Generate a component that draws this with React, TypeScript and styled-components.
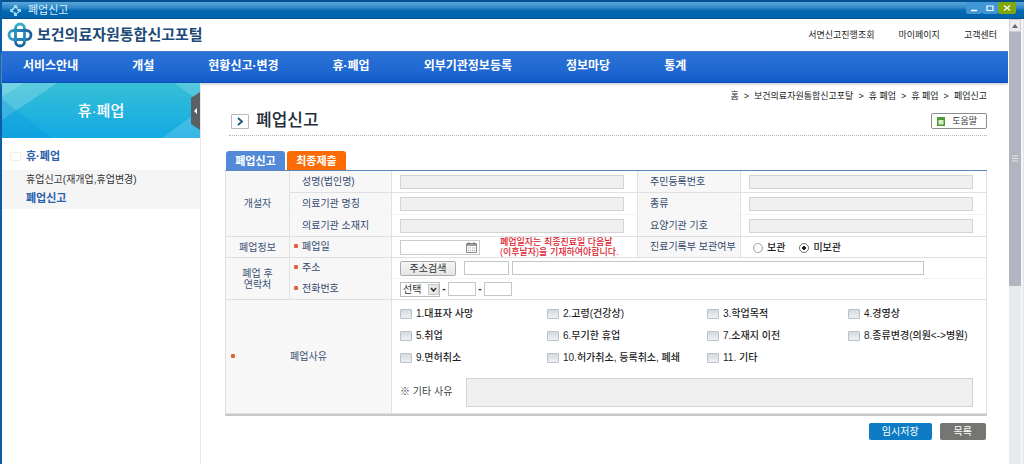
import React from 'react';
import styled, { createGlobalStyle, css } from 'styled-components';

const Global = createGlobalStyle`
  *, *::before, *::after { box-sizing: border-box; }
  body {
    margin: 0;
    background: #fff;
    color: #333;
    font: 10px/14px "Liberation Sans", "Noto Sans CJK KR", sans-serif;
  }
  button, input, select, textarea { font: inherit; color: inherit; margin: 0; }
  a { color: inherit; text-decoration: none; }
`;

const Window = styled.div`
  display: flex;
  flex-direction: column;
  min-height: 100vh;
  border-left: 2px solid #0a5ea8;
`;

const TitleBar = styled.div`
  display: flex;
  align-items: center;
  gap: 7px;
  height: 19px;
  padding: 0 8px;
  border-top: 2px solid #05508f;
  border-bottom: 1px solid #04528f;
  background: linear-gradient(#5aa7da 0, #3088c6 35%, #0368b3 55%, #0062ab 100%);
  color: #d5edff;
  font-size: 11px;
`;

const WindowButtons = styled.div`
  display: flex;
  align-self: flex-start;
  margin-left: auto;
`;

const WindowButton = styled.button<{ $close?: boolean }>`
  display: flex;
  align-items: center;
  justify-content: center;
  width: ${p => (p.$close ? 18 : 16)}px;
  height: 12px;
  padding: 0;
  border: 0;
  border-radius: 0 0 2px 2px;
  background: ${p => (p.$close ? '#7ea80d' : '#3f97d8')};
`;

const Body = styled.div`
  display: flex;
  flex: 1;
`;

const Page = styled.div`
  display: flex;
  flex: 1;
  flex-direction: column;
  min-width: 0;
`;

const ScrollTrack = styled.div`
  display: flex;
  flex-direction: column;
  width: 16px;
  padding: 0 3px 0 1px;
  border-right: 1px solid #e3e6e8;
  background: linear-gradient(90deg, #fff 1px, #e6ebec 1px, #e6ebec 13px, #f3f5f6 13px);
`;

const ScrollArrow = styled.button`
  display: flex;
  align-items: center;
  justify-content: center;
  width: 12px;
  height: 13px;
  padding: 0;
  border: 1px solid #cfcfd3;
  background: #ececee;
`;

const ScrollThumb = styled.div`
  display: flex;
  align-items: center;
  justify-content: center;
  width: 12px;
  height: 57%;
  background: #b4b4c0;
`;

const Header = styled.header`
  display: flex;
  align-items: center;
  justify-content: space-between;
  height: 32px;
  padding: 0 11px 0 5px;
`;

const Brand = styled.a`
  display: flex;
  align-items: center;
  gap: 4px;
  color: #1d4a78;
  font-size: 15px;
  font-weight: 700;
  line-height: 20px;
`;

const QuickLinks = styled.nav`
  display: flex;
  gap: 24px;
  color: #222;
  font-size: 9px;
`;

const MainNav = styled.nav`
  display: flex;
  height: 32px;
  padding: 0 21px;
  gap: 54px;
  border-top: 1px solid #3f7ccb;
  border-bottom: 1px solid #0c4fb4;
  background: linear-gradient(#2a72d4, #2069d2 60%, #135bcb);
  box-shadow: 0 2px 2px #d5d8dc;
  color: #fff;
  font-size: 12px;
  font-weight: 700;
  line-height: 28px;
  white-space: nowrap;
`;

const Content = styled.div`
  display: flex;
  flex: 1;
`;

const Sidebar = styled.aside`
  flex: none;
  width: 199px;
  border-right: 1px solid #e8e8e8;
`;

const Banner = styled.div`
  position: relative;
  display: flex;
  align-items: center;
  justify-content: center;
  height: 55px;
  color: #fff;
  font-size: 15px;
  font-weight: 500;
`;

const BannerArt = styled.svg`
  position: absolute;
  inset: 0;
  width: 100%;
  height: 100%;
`;

const BannerText = styled.span`
  position: relative;
`;

const Collapse = styled.button`
  position: absolute;
  top: 9px;
  right: 0;
  width: 9px;
  height: 38px;
  padding: 0;
  border: 0;
  background: none;
`;

const SideHeading = styled.h2`
  display: flex;
  align-items: center;
  gap: 5px;
  height: 32px;
  margin: 0;
  padding: 4px 8px 0;
  color: #2c62ac;
  font-size: 11px;
`;

const Folder = styled.span`
  width: 11px;
  height: 9px;
  border: 1px solid #f1eee8;
`;

const SideList = styled.ul`
  display: grid;
  gap: 4px;
  margin: 0;
  padding: 2px 0 3px 24px;
  list-style: none;
  background: #f5f5f6;
  line-height: 15px;
`;

const SideLink = styled.a<{ $current?: boolean }>`
  ${p => p.$current && css`
    color: #2c62ac;
    font-size: 11px;
    font-weight: 700;
  `}
`;

const Main = styled.main`
  flex: 1;
  min-width: 0;
  padding: 6px 21px 24px 24px;
`;

const Crumbs = styled.nav`
  display: flex;
  justify-content: flex-end;
  gap: 5px;
  color: #222;
  font-size: 9px;
  line-height: 14px;
`;

const TitleRow = styled.div`
  display: flex;
  align-items: center;
  gap: 7px;
  margin: 4px 0 0 4px;
  height: 29px;
  padding: 0 0 0 2px;
  border-bottom: 1px dotted #b5b5b5;
`;

const Heading = styled.h1`
  margin: 0;
  color: #222c38;
  font-size: 17px;
  font-weight: 500;
  line-height: 20px;
`;

const HelpButton = styled.button`
  display: flex;
  align-items: center;
  gap: 7px;
  height: 16px;
  margin-left: auto;
  padding: 0 9px 0 5px;
  border: 1px solid #8d8d8d;
  border-radius: 2px;
  background: #fff;
  font-size: 9px;
  line-height: 14px;
`;

const Tabs = styled.div`
  display: flex;
  gap: 2px;
  margin: 15px 0 0 1px;
`;

const Tab = styled.button<{ $accent?: boolean }>`
  width: 59px;
  height: 19px;
  padding: 0;
  border: 0;
  border-radius: 3px 3px 0 0;
  background: ${p => (p.$accent ? '#fb6b04' : '#5289d8')};
  color: #fff;
  font-size: 11px;
  font-weight: 700;
  line-height: 18px;
`;

const FormTable = styled.table`
  width: 100%;
  table-layout: fixed;
  border-spacing: 0;
  border-top: 1px solid #5b86bd;
  border-bottom: 2px solid #c6c8cb;
  border-left: 1px solid #dcdddf;
`;

const Col = styled.col<{ $width?: number }>`
  width: ${p => (p.$width ? p.$width + 'px' : 'auto')};
`;

const Row = styled.tr<{ $height?: number }>`
  height: ${p => p.$height ?? 22}px;
`;

const cell = css<{ $soft?: boolean }>`
  height: inherit;
  border-right: 1px solid #e0e1e3;
  border-bottom: 1px solid ${p => (p.$soft ? '#f3f3f4' : '#dfe0e2')};
`;

const Group = styled.th<{ $soft?: boolean }>`
  ${cell}
  padding: 0;
  background: #f7f7f8;
  color: #3b5172;
  font-weight: 400;
  line-height: 11px;
`;

const Label = styled.th<{ $soft?: boolean; $required?: boolean }>`
  ${cell}
  padding: 0 0 0 ${p => (p.$required ? 4 : 12)}px;
  background: #f7f7f8;
  color: #34496b;
  font-weight: 400;
  line-height: 14px;
  text-align: left;
  white-space: nowrap;
`;

const Value = styled.td<{ $soft?: boolean }>`
  ${cell}
  padding: 0 13px 0 8px;
`;

const Star = styled.span`
  display: inline-block;
  width: 4px;
  height: 4px;
  margin: 0 4px 2px 0;
  border-radius: 1px;
  background: #e2603a;
`;

const ReasonHead = styled.div`
  display: grid;
  grid-template-columns: 4px 1fr 4px;
  align-items: center;
  padding: 0 5px;
`;

const Line = styled.div`
  display: flex;
  align-items: center;
`;

const Field = styled.input<{ $width?: number; $gap?: number }>`
  display: block;
  width: ${p => (p.$width ? p.$width + 'px' : '100%')};
  height: 14px;
  margin-left: ${p => p.$gap ?? 0}px;
  padding: 0 3px;
  border: 1px solid #c3c5c8;
  border-radius: 0;
  background: #fff;
  &:disabled {
    border-color: #d2d3d5;
    background: #f0f0f0;
  }
`;

const DateBox = styled.div`
  display: flex;
  align-items: center;
  width: 80px;
  height: 15px;
  padding-right: 2px;
  border: 1px solid #c9cbce;
`;

const DateInput = styled.input`
  flex: 1;
  min-width: 0;
  height: 12px;
  padding: 0 3px;
  border: 0;
  background: none;
`;

const IconButton = styled.button`
  display: flex;
  padding: 0;
  border: 0;
  background: none;
`;

const Notice = styled.p`
  margin: 0 0 0 20px;
  color: #e0202c;
  font-size: 9px;
  font-weight: 500;
  line-height: 10px;
  white-space: nowrap;
`;

const SearchButton = styled.button`
  flex: none;
  width: 56px;
  height: 15px;
  margin-right: 8px;
  padding: 0;
  border: 1px solid #a9abae;
  border-radius: 2px;
  background: linear-gradient(#f6f6f6, #e4e4e4);
  line-height: 13px;
`;

const AddressField = styled(Field)`
  flex: 0 1 412px;
  min-width: 0;
`;

const SelectBox = styled.div`
  position: relative;
  width: 40px;
  height: 15px;
`;

const Select = styled.select`
  width: 100%;
  height: 100%;
  padding: 0 0 0 2px;
  border: 1px solid #b9bbbe;
  border-radius: 0;
  appearance: none;
  background: #fff;
  line-height: 13px;
`;

const SelectArrow = styled.svg`
  position: absolute;
  top: 2px;
  right: 1px;
  pointer-events: none;
`;

const Dash = styled.span`
  width: 8px;
  color: #222;
  font-weight: 700;
  text-align: center;
`;

const Radios = styled.div`
  display: flex;
  gap: 14px;
  padding: 2px 0 0 4px;
  color: #222;
`;

const Choice = styled.label`
  display: flex;
  align-items: center;
  gap: 4px;
  color: #1c1c1c;
  font-weight: 500;
  line-height: 14px;
  white-space: nowrap;
`;

const Radio = styled.input`
  appearance: none;
  width: 10px;
  height: 10px;
  border: 1px solid #9c9c9c;
  border-radius: 50%;
  background: #fff;
  &:checked {
    border-color: #6d6d6d;
    background: radial-gradient(circle, #222 0 2px, #fff 2px);
  }
`;

const Check = styled.input`
  appearance: none;
  width: 12px;
  height: 10px;
  border: 1px solid #b9c1c9;
  border-radius: 1px;
  background: linear-gradient(#d3dae1, #eef1f4);
`;

const Reasons = styled.div`
  display: grid;
  grid-template-columns: 147fr 160fr 141fr 125fr;
  grid-auto-rows: 14px;
  row-gap: 8px;
`;

const EtcRow = styled.label`
  display: flex;
  align-items: center;
  gap: 14px;
  margin-top: 13px;
  color: #444;
  white-space: nowrap;
`;

const EtcText = styled.textarea`
  display: block;
  flex: 1;
  height: 29px;
  border: 1px solid #d2d3d5;
  border-radius: 0;
  background: #f0f0f0;
  resize: none;
`;

const Actions = styled.div`
  display: flex;
  justify-content: flex-end;
  gap: 8px;
  margin-top: 7px;
  padding-right: 1px;
`;

const ActionButton = styled.button<{ $primary?: boolean }>`
  height: 17px;
  padding: 0 ${p => (p.$primary ? 13 : 14)}px;
  border: 0;
  border-radius: 2px;
  background: ${p => (p.$primary ? '#0d7cc4' : '#757572')};
  color: #fff;
  line-height: 16px;
`;

const LoopMark = () => (
  <svg width="26" height="26" viewBox="0 0 26 26" fill="none" strokeWidth="2.800" aria-hidden="true">
    <defs>
      <linearGradient id="loopV" x1="0" y1="0" x2="0" y2="1">
        <stop offset="0" stopColor="#35b3c6" />
        <stop offset="1" stopColor="#1a5fa0" />
      </linearGradient>
      <linearGradient id="loopH" x1="0" y1="0" x2="1" y2="0">
        <stop offset="0" stopColor="#2f9fca" />
        <stop offset="1" stopColor="#1b5d9c" />
      </linearGradient>
    </defs>
    <rect x="8.500" y="2" width="9" height="22" rx="4.500" stroke="url(#loopV)" />
    <rect x="2" y="8.500" width="22" height="9" rx="4.500" stroke="url(#loopH)" />
    <path d="M8.500 6.500v4M17.500 15.500v4" stroke="#2a8fbb" />
  </svg>
);

const TitleMark = () => (
  <svg width="11" height="11" viewBox="0 0 11 11" aria-hidden="true">
    <path d="M4 0h3v3H4zM4 8h3v3H4zM0 4h3v3H0zM8 4h3v3H8z" fill="#8fdcf3" />
    <path d="M3 3h5v5H3z" fill="none" stroke="#d8f3ff" strokeDasharray="2 1" />
  </svg>
);

const menu = ['서비스안내', '개설', '현황신고·변경', '휴·폐업', '외부기관정보등록', '정보마당', '통계'];
const crumbs = ['홈', '보건의료자원통합신고포탈', '휴 폐업', '휴 폐업', '폐업신고'];
const owner = [
  ['성명(법인명)', '주민등록번호'],
  ['의료기관 명칭', '종류'],
  ['의료기관 소재지', '요양기관 기호'],
];
const reasons = [
  '1.대표자 사망', '2.고령(건강상)', '3.학업목적', '4.경영상',
  '5.취업', '6.무기한 휴업', '7.소재지 이전', '8.종류변경(의원<->병원)',
  '9.면허취소', '10.허가취소, 등록취소, 폐쇄', '11. 기타',
];

export default function App() {
  return (
    <>
      <Global />
      <Window>
        <TitleBar>
          <TitleMark />
          <span>폐업신고</span>
          <WindowButtons>
            <WindowButton aria-label="최소화">
              <svg width="8" height="8" viewBox="0 0 8 8"><path d="M1 6.500h6" stroke="#fff" strokeWidth="1.500" /></svg>
            </WindowButton>
            <WindowButton aria-label="최대화">
              <svg width="8" height="8" viewBox="0 0 8 8"><path d="M1 2h6v4.500H1z" fill="none" stroke="#fff" strokeWidth="1.200" /></svg>
            </WindowButton>
            <WindowButton $close aria-label="닫기">
              <svg width="8" height="8" viewBox="0 0 8 8"><path d="M1 1.500l6 5M7 1.500l-6 5" stroke="#fff" strokeWidth="1.300" /></svg>
            </WindowButton>
          </WindowButtons>
        </TitleBar>
        <Body>
          <Page>
            <Header>
              <Brand href="#home"><LoopMark />보건의료자원통합신고포털</Brand>
              <QuickLinks>
                <a href="#progress">서면신고진행조회</a>
                <a href="#mypage">마이페이지</a>
                <a href="#support">고객센터</a>
              </QuickLinks>
            </Header>
            <MainNav>
              {menu.map(m => <a key={m} href="#menu">{m}</a>)}
            </MainNav>
            <Content>
              <Sidebar>
                <Banner>
                  <BannerArt viewBox="0 0 198 55" preserveAspectRatio="none" aria-hidden="true">
                    <defs>
                      <linearGradient id="sky" x1="0" y1="0" x2="0" y2="1">
                        <stop offset="0" stopColor="#36bfd6" />
                        <stop offset="1" stopColor="#12a9e4" />
                      </linearGradient>
                    </defs>
                    <path d="M0 0h198v55H0z" fill="url(#sky)" />
                    <path d="M0 0h55L0 37z" fill="#fff" opacity=".2" />
                    <path d="M0 0h22L0 14z" fill="#fff" opacity=".15" />
                    <path d="M0 16l50 39H0z" fill="#0a93d6" opacity=".3" />
                    <path d="M160 55l38-28v28zM172 0h26v18z" fill="#fff" opacity=".16" />
                  </BannerArt>
                  <BannerText>휴·폐업</BannerText>
                  <Collapse aria-label="메뉴 접기">
                    <svg width="9" height="38" viewBox="0 0 9 38">
                      <path d="M9 0L0 6v26l9 6z" fill="#5b6064" />
                      <path d="M6 16v6l-3-3z" fill="#fff" />
                    </svg>
                  </Collapse>
                </Banner>
                <SideHeading><Folder />휴·폐업</SideHeading>
                <SideList>
                  <li><SideLink href="#suspend">휴업신고(재개업,휴업변경)</SideLink></li>
                  <li><SideLink href="#close" $current>폐업신고</SideLink></li>
                </SideList>
              </Sidebar>
              <Main>
                <Crumbs>
                  {crumbs.map((c, i) => (
                    <React.Fragment key={i}>
                      {i > 0 && <span>&gt;</span>}
                      <a href="#crumb">{c}</a>
                    </React.Fragment>
                  ))}
                </Crumbs>
                <TitleRow>
                  <svg width="18" height="15" viewBox="0 0 18 15" fill="none" aria-hidden="true">
                    <path d="M.5.5h17v14H.5z" stroke="#b3bac2" />
                    <path d="M7 4l4 3.500-4 3.500" stroke="#17597c" strokeWidth="1.800" />
                  </svg>
                  <Heading>폐업신고</Heading>
                  <HelpButton>
                    <svg width="8" height="9" viewBox="0 0 8 9" aria-hidden="true">
                      <path d="M0 0h8v9H0z" fill="#4f9a35" />
                      <path d="M1.500 3h5v4.500h-5z" fill="#d6efc4" />
                    </svg>
                    도움말
                  </HelpButton>
                </TitleRow>
                <Tabs>
                  <Tab>폐업신고</Tab>
                  <Tab $accent>최종제출</Tab>
                </Tabs>
                <FormTable>
                  <colgroup>
                    <Col $width={64} />
                    <Col $width={102} />
                    <Col />
                    <Col $width={103} />
                    <Col />
                  </colgroup>
                  <tbody>
                    {owner.map(([left, right], i) => (
                      <Row key={left}>
                        {i === 0 && <Group rowSpan={3} scope="rowgroup">개설자</Group>}
                        <Label $soft={i === 1}><label htmlFor={'l' + i}>{left}</label></Label>
                        <Value $soft={i === 1}><Field id={'l' + i} disabled /></Value>
                        <Label $soft={i === 1}><label htmlFor={'r' + i}>{right}</label></Label>
                        <Value $soft={i === 1}><Field id={'r' + i} disabled /></Value>
                      </Row>
                    ))}
                    <Row $height={21}>
                      <Group scope="row">폐업정보</Group>
                      <Label $required><Star /><label htmlFor="date">폐업일</label></Label>
                      <Value>
                        <Line>
                          <DateBox>
                            <DateInput id="date" />
                            <IconButton aria-label="달력">
                              <svg width="11" height="11" viewBox="0 0 11 11" aria-hidden="true">
                                <path d="M.5 1.500h10v9H.5z" fill="#fff" stroke="#8a8a8a" />
                                <path d="M1 2h9v2H1z" fill="#999" />
                                <path d="M3 0v2M8 0v2" stroke="#777" />
                                <path d="M2 6h7M2 8.500h7" stroke="#999" strokeDasharray="1 1" />
                              </svg>
                            </IconButton>
                          </DateBox>
                          <Notice>폐업일자는 최종진료일 다음날<br />(이후날자)을 기재하여야합니다.</Notice>
                        </Line>
                      </Value>
                      <Label>진료기록부 보관여부</Label>
                      <Value>
                        <Radios role="radiogroup" aria-label="진료기록부 보관여부">
                          <Choice><Radio type="radio" name="keep" />보관</Choice>
                          <Choice><Radio type="radio" name="keep" defaultChecked />미보관</Choice>
                        </Radios>
                      </Value>
                    </Row>
                    <Row $height={21}>
                      <Group rowSpan={2} scope="rowgroup">폐업 후<br />연락처</Group>
                      <Label $soft $required><Star /><label htmlFor="addr">주소</label></Label>
                      <Value $soft colSpan={3}>
                        <Line>
                          <SearchButton>주소검색</SearchButton>
                          <Field $width={45} aria-label="우편번호" />
                          <AddressField id="addr" $gap={3} />
                        </Line>
                      </Value>
                    </Row>
                    <Row $height={21}>
                      <Label $required><Star /><label htmlFor="tel">전화번호</label></Label>
                      <Value colSpan={3}>
                        <Line>
                          <SelectBox>
                            <Select id="tel"><option>선택</option></Select>
                            <SelectArrow width="11" height="11" viewBox="0 0 11 11" aria-hidden="true">
                              <path d="M.5.5h10v10H.5z" fill="#e6e8ea" stroke="#c6c9cc" />
                              <path d="M3 4l2.500 3L8 4" fill="none" stroke="#333" strokeWidth="1.500" />
                            </SelectArrow>
                          </SelectBox>
                          <Dash>-</Dash>
                          <Field $width={28} aria-label="국번" />
                          <Dash>-</Dash>
                          <Field $width={28} aria-label="번호" />
                        </Line>
                      </Value>
                    </Row>
                    <Row $height={114}>
                      <Group colSpan={2} scope="row">
                        <ReasonHead><Star /><span>폐업사유</span></ReasonHead>
                      </Group>
                      <Value colSpan={3}>
                        <Reasons>
                          {reasons.map(r => (
                            <Choice key={r}><Check type="checkbox" />{r}</Choice>
                          ))}
                        </Reasons>
                        <EtcRow>※ 기타 사유<EtcText disabled /></EtcRow>
                      </Value>
                    </Row>
                  </tbody>
                </FormTable>
                <Actions>
                  <ActionButton $primary>임시저장</ActionButton>
                  <ActionButton>목록</ActionButton>
                </Actions>
              </Main>
            </Content>
          </Page>
          <ScrollTrack>
            <ScrollArrow aria-label="위로">
              <svg width="6" height="4" viewBox="0 0 6 4"><path d="M3 0l3 4H0z" fill="#666" /></svg>
            </ScrollArrow>
            <ScrollThumb>
              <svg width="6" height="7" viewBox="0 0 6 7"><path d="M0 1h6M0 3.500h6M0 6h6" stroke="#e4e4ee" /></svg>
            </ScrollThumb>
          </ScrollTrack>
        </Body>
      </Window>
    </>
  );
}
